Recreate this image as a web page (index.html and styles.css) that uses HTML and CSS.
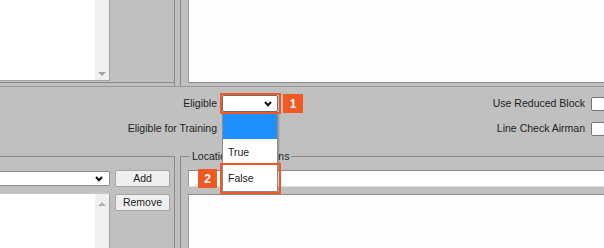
FILE: index.html
```html
<!DOCTYPE html>
<html>
<head>
<meta charset="utf-8">
<link rel="stylesheet" href="styles.css">
</head>
<body>
<div class="page">
  <div class="top">
    <div class="tl">
      <div class="tl-inner">
        <div class="listbox lb-top">
          <div class="sb sb-down"><span class="arr-down"></span></div>
        </div>
      </div>
    </div>
    <div class="tr">
      <div class="textarea"></div>
    </div>
  </div>

  <div class="middle">
    <div class="lbl">Eligible</div>
    <div class="ctl">
      <div class="sel">
        <svg width="8" height="6" viewBox="0 0 8 6"><polyline points="1,1 4,4.2 7,1" fill="none" stroke="#111" stroke-width="2"/></svg>
      </div>
    </div>
    <div class="spacer"></div>
    <div class="lbl">Use Reduced Block</div>
    <div class="chk"><span class="cb"></span></div>

    <div class="lbl">Eligible for Training</div>
    <div class="ctl"><span class="cb"></span></div>
    <div class="spacer"></div>
    <div class="lbl">Line Check Airman</div>
    <div class="chk"><span class="cb"></span></div>
  </div>

  <div class="bottom">
    <div class="bl">
      <div class="bl-row">
        <div class="bl-sel">
          <svg width="8" height="6" viewBox="0 0 8 6"><polyline points="1,1 4,4.2 7,1" fill="none" stroke="#111" stroke-width="2"/></svg>
        </div>
        <button class="btn">Add</button>
      </div>
      <div class="bl-row2">
        <div class="listbox lb-bottom">
          <div class="sb sb-up"><span class="arr-up"></span></div>
        </div>
        <button class="btn btn-remove">Remove</button>
      </div>
    </div>
    <div class="br">
      <span class="legend">Location Restrictions</span>
      <div class="inp"></div>
      <div class="br-list"></div>
    </div>
  </div>

  <div class="dd">
    <div class="opt opt-on"></div>
    <div class="opt">True</div>
    <div class="opt">False</div>
  </div>
  <div class="hl hl1"></div>
  <div class="hl hl2"></div>
  <div class="badge b1">1</div>
  <div class="badge b2">2</div>
</div>
</body>
</html>
```

FILE: styles.css
```css
html, body {
  margin: 0;
  padding: 0;
}
body {
  background: #c0c0c0;
  font-family: "Liberation Sans", Arial, sans-serif;
  font-size: 10.5px;
  color: #222;
  width: 604px;
  height: 248px;
  overflow: hidden;
}
.page {
  position: relative;
  width: 604px;
  height: 248px;
  overflow: hidden;
}

/* top row */
.top {
  display: flex;
  height: 86px;
}
.tl {
  width: 174px;
  border-right: 1px solid #888;
  flex: none;
}
.tl-inner {
  height: 82px;
  border-bottom: 1px solid #888;
}
.listbox {
  background: #fff;
  display: flex;
  justify-content: flex-end;
  box-sizing: border-box;
}
.lb-top {
  width: 110px;
  height: 81px;
  border-right: 1px solid #a4a4a4;
  border-bottom: 1px solid #a4a4a4;
}
.sb {
  width: 14px;
  background: #f0f0f0;
  display: flex;
  flex-direction: column;
  align-items: center;
}
.sb-down {
  justify-content: flex-end;
  padding-bottom: 4px;
  box-sizing: border-box;
}
.sb-up {
  padding-top: 8px;
  box-sizing: border-box;
}
.arr-down {
  width: 0;
  height: 0;
  border-left: 4px solid transparent;
  border-right: 4px solid transparent;
  border-top: 4px solid #a3a3a3;
}
.arr-up {
  width: 0;
  height: 0;
  border-left: 4px solid transparent;
  border-right: 4px solid transparent;
  border-bottom: 4px solid #b0b0b0;
}
.tr {
  flex: 1;
  margin-left: 5px;
  border-left: 1px solid #888;
  padding-left: 7px;
}
.textarea {
  height: 82px;
  background: #fdfdfd;
  border-left: 1px solid #9a9a9a;
  border-bottom: 1px solid #888;
}

/* middle */
.middle {
  box-sizing: border-box;
  height: 70px;
  border-top: 1px solid #999;
  padding-top: 8px;
  display: grid;
  grid-template-columns: 217px 61px 1fr auto 19px;
  grid-template-rows: 17px 17px;
  row-gap: 8px;
  align-items: center;
}
.lbl {
  text-align: right;
  white-space: nowrap;
  line-height: 13px;
}
.ctl {
  padding-left: 5px;
  display: flex;
  align-items: center;
}
.chk {
  padding-left: 6px;
  display: flex;
  align-items: center;
}
.sel {
  width: 56px;
  height: 17px;
  box-sizing: border-box;
  border: 1px solid #6f6f6f;
  border-radius: 2px;
  background: #fff;
  display: flex;
  align-items: center;
  justify-content: flex-end;
  padding-right: 5px;
}
.cb {
  display: block;
  width: 14px;
  height: 14px;
  box-sizing: border-box;
  border: 1px solid #767676;
  border-radius: 2px;
  background: #fff;
  flex: none;
}

/* bottom */
.bottom {
  display: flex;
  height: 92px;
}
.bl {
  width: 174px;
  flex: none;
  border-top: 1px solid #888;
  border-right: 1px solid #888;
  padding-top: 13px;
}
.bl-row {
  display: flex;
  align-items: center;
  height: 17px;
  gap: 5px;
}
.bl-sel {
  width: 110px;
  height: 15px;
  box-sizing: border-box;
  background: #fff;
  border: 1px solid #8a8a8a;
  border-left: none;
  border-radius: 0 2px 2px 0;
  display: flex;
  align-items: center;
  justify-content: flex-end;
  padding-right: 6px;
}
.btn {
  width: 55px;
  height: 17px;
  box-sizing: border-box;
  margin: 0;
  padding: 0;
  background: #efefef;
  border: 1px solid #a6a6a6;
  border-radius: 2px;
  font-family: "Liberation Sans", Arial, sans-serif;
  font-size: 10.5px;
  color: #222;
  line-height: 15px;
}
.bl-row2 {
  display: flex;
  align-items: flex-start;
  gap: 5px;
  margin-top: 6px;
}
.lb-bottom {
  width: 110px;
  height: 60px;
  border-top: 1px solid #c8c8c8;
  border-right: 1px solid #a4a4a4;
}
.btn-remove {
  margin-top: 1px;
}
.br {
  flex: 1;
  margin-left: 5px;
  border-top: 1px solid #888;
  border-left: 1px solid #888;
}
.legend {
  display: block;
  width: fit-content;
  margin-top: -7px;
  margin-left: 9px;
  padding: 0 2px;
  background: #c0c0c0;
  line-height: 13px;
  white-space: nowrap;
}
.inp {
  margin-top: 7px;
  margin-left: 7px;
  height: 17px;
  box-sizing: border-box;
  background: #fff;
  border-top: 1px solid #888;
  border-left: 1px solid #999;
  border-bottom: 1px solid #dcdcdc;
}
.br-list {
  margin-top: 7px;
  margin-left: 7px;
  height: 60px;
  background: #fdfdfd;
  border-top: 1px solid #8a8a8a;
  border-left: 1px solid #999;
}

/* overlays: open dropdown and annotations */
.dd {
  position: absolute;
  left: 222px;
  top: 112px;
  width: 56px;
  box-sizing: border-box;
  border: 1px solid #8a8a8a;
  background: #fff;
  box-shadow: 1px 1px 2px rgba(0, 0, 0, 0.25);
}
.opt {
  height: 26px;
  line-height: 26px;
  padding-left: 5px;
  color: #222;
}
.opt-on {
  background: #1e90ff;
}
.hl {
  position: absolute;
  box-sizing: border-box;
  border: 2px solid #f05a22;
}
.hl1 {
  left: 220px;
  top: 93px;
  width: 61px;
  height: 21px;
}
.hl2 {
  left: 220px;
  top: 163px;
  width: 61px;
  height: 31px;
}
.badge {
  position: absolute;
  background: #f05a22;
  color: #fff;
  font-family: "Liberation Sans", Arial, sans-serif;
  font-weight: bold;
  font-size: 12px;
  display: flex;
  align-items: center;
  justify-content: center;
}
.b1 {
  left: 283px;
  top: 94px;
  width: 20px;
  height: 19px;
}
.b2 {
  left: 198px;
  top: 169px;
  width: 19px;
  height: 19px;
}
```
